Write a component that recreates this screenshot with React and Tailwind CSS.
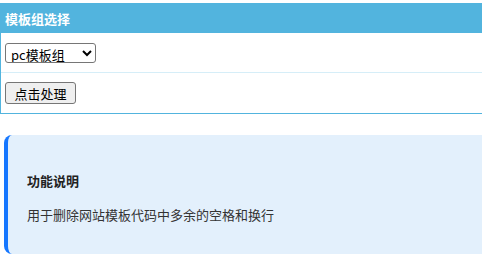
export default function App() {
  const font = { fontFamily: '"Microsoft YaHei", "Noto Sans CJK SC", sans-serif' };
  return (
    <div className="w-[482px] h-[260px] overflow-hidden bg-white text-[13px] text-[#333]" style={font}>
      <div className="pt-[3px]">
        <div className="w-[500px] border-t border-b border-l border-[#52b4de]">
          <div className="h-[29px] bg-[#52b4de] text-white font-bold flex items-center px-[4px]">
            模板组选择
          </div>
          <div className="h-[40px] border-b border-[#d6eef8] flex items-center px-[4px]">
            <select className="h-[20px] w-[91px] border border-[#767676] rounded-[3px] bg-white text-[13px] text-black pl-[1px]" style={font} defaultValue="pc">
              <option value="pc">pc模板组</option>
              <option value="m">手机模板组</option>
            </select>
          </div>
          <div className="h-[40px] flex items-center px-[4px]">
            <button className="h-[22px] w-[71px] border border-[#767676] rounded-[3px] bg-[#efefef] text-[13px] text-black leading-none" style={font}>
              点击处理
            </button>
          </div>
        </div>
      </div>
      <div className="mt-[21px] ml-[4px] w-[500px] h-[119px] bg-[#e3f0fc] border-l-4 border-[#1677ff] rounded-l-[8px] pl-[19px] pt-[36px]">
        <div className="font-bold text-[#222] leading-[20px]">功能说明</div>
        <div className="mt-[14px] leading-[20px]">用于删除网站模板代码中多余的空格和换行</div>
      </div>
    </div>
  );
}
